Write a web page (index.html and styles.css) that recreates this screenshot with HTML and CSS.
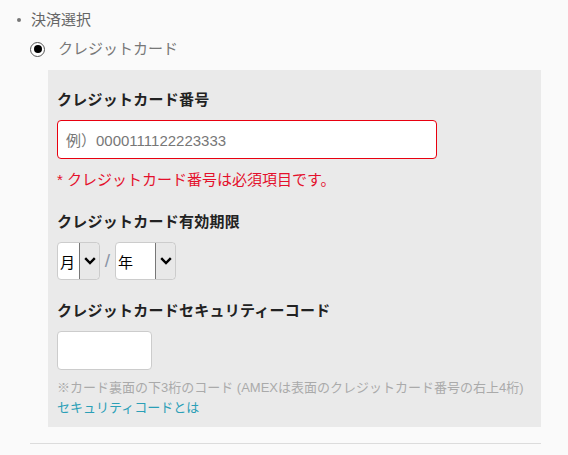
FILE: index.html
```html
<!DOCTYPE html>
<html lang="ja">
<head>
    <meta charset="UTF-8">
    <meta name="viewport" content="width=device-width, initial-scale=1.0">
    <title>決済選択</title>
    <link rel="stylesheet" href="styles.css">
</head>
<body>
    <div class="payment">
        <div class="section-title">決済選択</div>

        <label class="radio-row">
            <span class="radio"><span class="radio-dot"></span></span>
            <span class="radio-label">クレジットカード</span>
        </label>

        <div class="card-box">
            <div class="field-label">クレジットカード番号</div>
            <div class="text-input card-number is-error">
                <span class="placeholder">例）0000111122223333</span>
            </div>
            <div class="error-text">* クレジットカード番号は必須項目です。</div>

            <div class="field-label label-gap">クレジットカード有効期限</div>
            <div class="expiry">
                <div class="select select-month">
                    <span class="select-value">月</span>
                    <span class="select-arrow">
                        <svg width="12" height="8" viewBox="0 0 12 8"><path d="M1.2 1.2 L6 6 L10.8 1.2" fill="none" stroke="#000" stroke-width="2.4"/></svg>
                    </span>
                </div>
                <span class="slash">/</span>
                <div class="select select-year">
                    <span class="select-value">年</span>
                    <span class="select-arrow">
                        <svg width="12" height="8" viewBox="0 0 12 8"><path d="M1.2 1.2 L6 6 L10.8 1.2" fill="none" stroke="#000" stroke-width="2.4"/></svg>
                    </span>
                </div>
            </div>

            <div class="field-label label-gap-lg">クレジットカードセキュリティーコード</div>
            <div class="text-input security-code"></div>
            <div class="note">※カード裏面の下3桁のコード (AMEXは表面のクレジットカード番号の右上4桁)</div>
            <a class="help-link" href="#">セキュリティコードとは</a>
        </div>

        <hr class="divider">
    </div>
</body>
</html>
```

FILE: styles.css
```css
* {
    margin: 0;
    padding: 0;
    box-sizing: border-box;
}

body {
    font-family: "Liberation Sans", "Noto Sans CJK JP", sans-serif;
    background-color: #fafafa;
    color: #333;
    font-size: 15px;
}

.payment {
    width: 511px;
    margin-left: 30px;
    padding-top: 8px;
}

.section-title {
    display: flex;
    align-items: center;
    gap: 10px;
    margin-left: -13px;
    line-height: 24px;
    color: #666;
}

.section-title::before {
    content: "";
    width: 4px;
    height: 4px;
    border-radius: 50%;
    background-color: #777;
}

.radio-row {
    display: flex;
    align-items: center;
    margin-top: 5px;
    line-height: 24px;
}

.radio {
    width: 15px;
    height: 15px;
    border: 1px solid #555;
    border-radius: 50%;
    background-color: #fff;
    display: flex;
    align-items: center;
    justify-content: center;
}

.radio-dot {
    width: 8px;
    height: 8px;
    border-radius: 50%;
    background-color: #000;
}

.radio-label {
    margin-left: 13px;
    color: #777;
}

.card-box {
    margin-top: 9px;
    margin-left: 18px;
    background-color: #eaeaea;
    padding: 19px 9px 9px;
}

.field-label {
    font-weight: bold;
    line-height: 22px;
    letter-spacing: 0.25px;
    color: #222;
    margin-bottom: 9px;
}

.label-gap {
    margin-top: 20px;
}

.label-gap-lg {
    margin-top: 20px;
}

.text-input {
    height: 39px;
    background-color: #fff;
    border: 1px solid #ccc;
    border-radius: 4px;
    display: flex;
    align-items: center;
}

.card-number {
    width: 380px;
    padding-left: 8px;
}

.is-error {
    border: 1.5px solid #e8000f;
}

.placeholder {
    color: #777;
}

.security-code {
    width: 95px;
}

.error-text {
    margin-top: 10px;
    line-height: 22px;
    color: #e4102c;
}

.expiry {
    display: flex;
    align-items: center;
}

.select {
    height: 38px;
    display: flex;
    background-color: #fff;
    border: 1px solid #ccc;
    border-radius: 4px;
    overflow: hidden;
}

.select-value {
    display: flex;
    align-items: center;
    padding-left: 2px;
    color: #000;
}

.select-month {
    width: 43px;
}

.select-month .select-value {
    width: 21px;
}

.select-year {
    width: 61px;
}

.select-year .select-value {
    width: 39px;
}

.select-arrow {
    flex: 1;
    display: flex;
    align-items: center;
    justify-content: center;
    background-color: #e8e8e8;
    border: 1px solid #777;
    border-radius: 0 3px 3px 0;
    margin: -1px -1px -1px 0;
}

.slash {
    width: 15px;
    text-align: center;
    font-size: 19px;
    color: #8a95a6;
}

.note {
    margin-top: 8px;
    font-size: 13px;
    line-height: 20px;
    color: #aaa;
}

.help-link {
    display: block;
    font-size: 13px;
    line-height: 20px;
    color: #2a9fb7;
    text-decoration: none;
}

.divider {
    margin-top: 16px;
    border: none;
    border-top: 1px solid #dcdcdc;
}
```
